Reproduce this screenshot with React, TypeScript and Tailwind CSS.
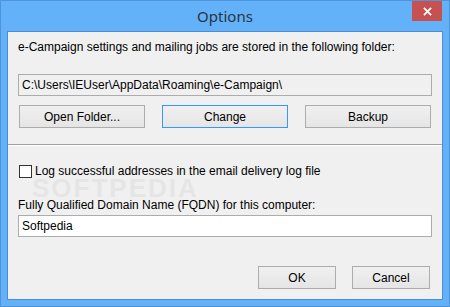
const font = "font-['Liberation_Sans',Arial,sans-serif]";

const buttonClasses =
  "flex h-[23px] items-center justify-center border bg-gradient-to-b from-[#f0f0f0] to-[#e5e5e5] text-[12px] text-black";

const Options = () => {
  return (
    <div className={`${font} flex h-[307px] w-[450px] flex-col border border-[#4f94d8] bg-[#63b1f8] px-[6px] pb-[6px]`}>
      <div className="relative flex h-[30px] items-center justify-center">
        <span className="font-['Noto_Sans',sans-serif] text-[15px] leading-none text-[#2b3440]">Options</span>
        <div className="absolute right-[1px] top-0 flex h-[20px] w-[30px] items-center justify-center bg-[#c75050]">
          <svg viewBox="0 0 10 10" className="h-[9px] w-[9px] stroke-white [stroke-width:2]">
            <path d="M1 1 9 9M9 1 1 9" />
          </svg>
        </div>
      </div>

      <div className="relative flex flex-1 flex-col border border-[#4b8dcf] bg-[#f0f0f0] px-[10px] pt-[8px] pb-[10px] text-[12px] text-black">
        <p className="h-[15px] leading-[15px]">
          e-Campaign settings and mailing jobs are stored in the following folder:
        </p>

        <div className="mt-[19px] flex h-[22px] items-center border border-[#acacac] bg-[#f0f0f0] px-[3px]">
          C:\Users\IEUser\AppData\Roaming\e-Campaign\
        </div>

        <div className="mt-[9px] flex gap-[17px] px-[1px]">
          <button className={`${buttonClasses} w-[126px] border-[#acacac]`}>Open Folder...</button>
          <button className={`${buttonClasses} w-[126px] border-[#3399ff]`}>Change</button>
          <button className={`${buttonClasses} w-[126px] border-[#acacac]`}>Backup</button>
        </div>

        <div className="-mx-[10px] mt-[16px] border-t border-b border-t-[#a0a0a0] border-b-white" />

        <label className="mt-[19px] flex h-[13px] items-center gap-[3px] pl-[1px]">
          <span className="h-[13px] w-[13px] border border-[#333] bg-white" />
          <span className="leading-[15px]">Log successful addresses in the email delivery log file</span>
        </label>

        <p className="mt-[20px] h-[15px] leading-[15px]">
          Fully Qualified Domain Name (FQDN) for this computer:
        </p>

        <div className="mt-[2px] flex h-[22px] items-center border border-[#acacac] bg-white px-[3px]">
          Softpedia
        </div>

        <div className="flex-1" />

        <div className="flex justify-end gap-[16px] pr-[2px]">
          <button className={`${buttonClasses} w-[78px] border-[#acacac]`}>OK</button>
          <button className={`${buttonClasses} w-[78px] border-[#acacac]`}>Cancel</button>
        </div>

        <div className="pointer-events-none absolute left-[24px] top-[137px] text-[26px] font-bold tracking-[2px] text-[#d4d4d4]/40">
          SOFTPEDIA
        </div>
      </div>
    </div>
  );
};

export default function App() {
  return <Options />;
}
